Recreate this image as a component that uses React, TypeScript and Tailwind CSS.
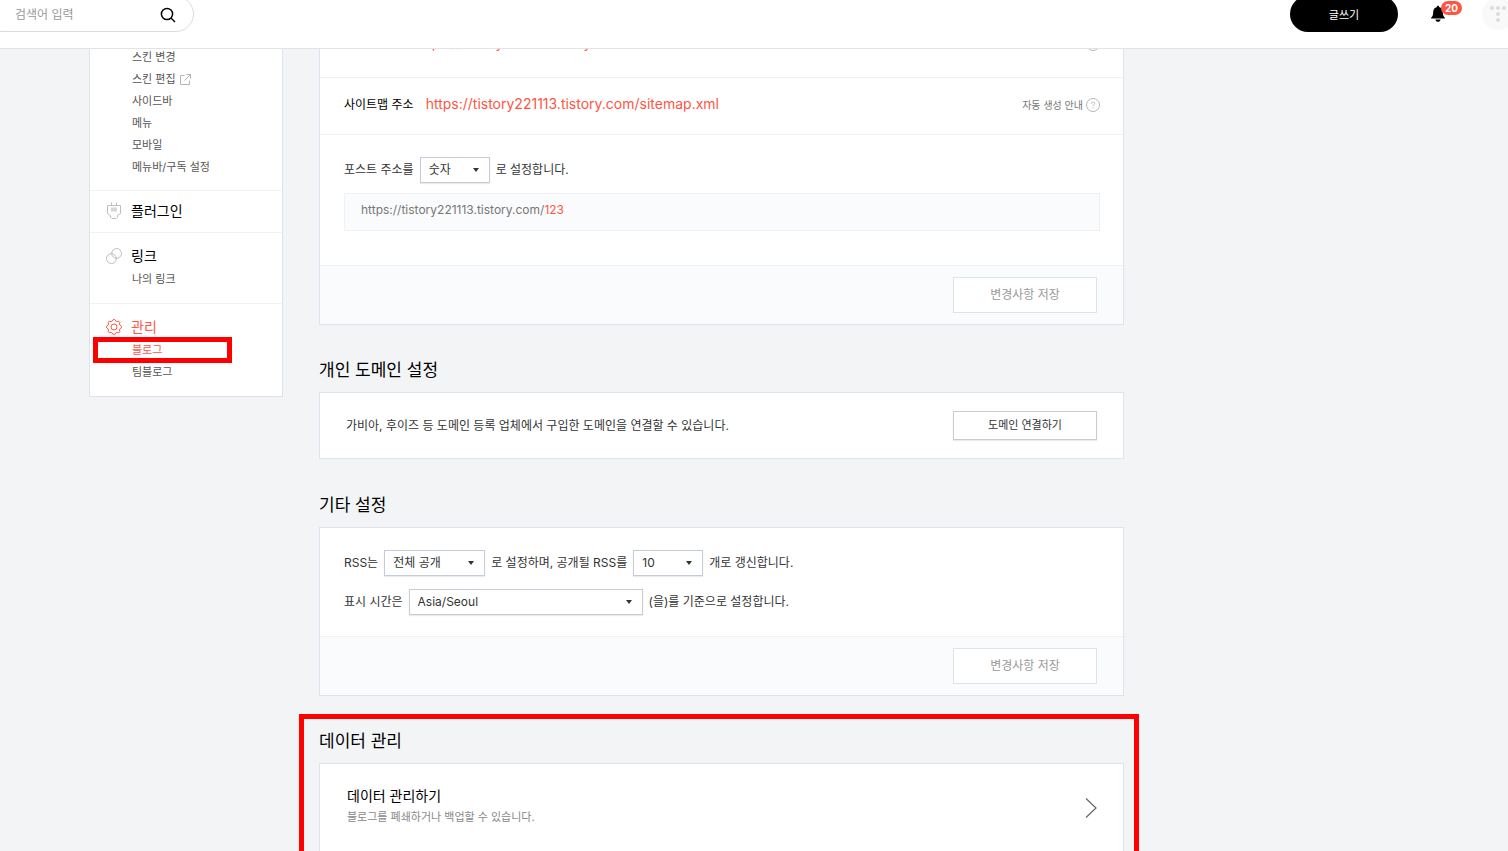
import { useState } from 'react';

const MAIN_FONT = "font-['Inter','Noto_Sans_CJK_KR',sans-serif]";

const SKIN_MENU = [
  { label: '스킨 변경' },
  { label: '스킨 편집', external: true },
  { label: '사이드바' },
  { label: '메뉴' },
  { label: '모바일' },
  { label: '메뉴바/구독 설정' }
];

const BLOG_URL = 'https://tistory221113.tistory.com';

// 8 teeth, four points per tooth
const GEAR_POINTS = Array.from({ length: 32 }, (_, i) => {
  const radius = i % 4 < 2 ? 7.5 : 6.2;
  const angle = ((i - 0.5) * Math.PI) / 16;
  return `${(8 + radius * Math.cos(angle)).toFixed(2)},${(8 + radius * Math.sin(angle)).toFixed(2)}`;
}).join(' ');

function SearchIcon() {
  return (
    <svg width="16" height="16" viewBox="0 0 16 16" fill="none" stroke="#000" strokeWidth="1.5">
      <circle cx="7" cy="7" r="5.6" />
      <path d="M11 11l4 4" />
    </svg>
  );
}

function BellIcon() {
  return (
    <svg width="16" height="18" viewBox="0 0 16 18" fill="#000">
      <path d="M8 0.8c.7 0 1.1.5 1.1 1.1C11.5 2.5 12.8 4.5 12.8 7c0 3 .7 4.6 2 5.6v.9H1.2v-.9c1.3-1 2-2.6 2-5.600 0-2.500 1.300-4.500 3.700-5.100C6.900 1.300 7.300.8 8 .8z" />
      <path d="M5.400 14.500h5.200c-.3 1.500-1.300 2.300-2.600 2.300s-2.300-.8-2.600-2.300z" />
    </svg>
  );
}

function ExternalIcon() {
  return (
    <svg width="11" height="11" viewBox="0 0 11 11" fill="none" stroke="#b5b5b5">
      <path d="M4.500 1.500h-4v9h9v-4" />
      <path d="M6.500.5h4v4M10.500.5l-6 6" />
    </svg>
  );
}

function PlugIcon() {
  return (
    <svg width="16" height="18" viewBox="0 0 16 18" fill="none" stroke="#bdbdbd">
      <path d="M1.500 3.500h13v8l-3 2v1.500l-1.500 1.500h-4L4.500 15v-1.500l-3-2z" />
      <path d="M5.500 0.500v3M10.500 0.500v3" />
      <path d="M5 6.500h6M5 8.500h6" stroke="#d6d6d6" strokeWidth="2" />
    </svg>
  );
}

function LinkIcon() {
  return (
    <svg width="16" height="16" viewBox="0 0 16 16" fill="none" stroke="#bdbdbd">
      <circle cx="10.600" cy="5.400" r="4.900" />
      <circle cx="5.400" cy="10.600" r="4.900" />
    </svg>
  );
}

function GearIcon() {
  return (
    <svg width="16" height="16" viewBox="0 0 16 16" fill="none" stroke="#ff5544">
      <circle cx="8" cy="8" r="3" />
      <polygon points={GEAR_POINTS} strokeLinejoin="round" />
    </svg>
  );
}

function HelpIcon() {
  return (
    <svg width="14" height="14" viewBox="0 0 14 14" fill="none" stroke="#b5b5b5">
      <circle cx="7" cy="7" r="6.500" />
      <path d="M5.300 5.700c0-1 .7-1.600 1.700-1.600s1.700.6 1.700 1.500c0 1.100-1.600 1.200-1.600 2.400M7.100 9v1.200" />
    </svg>
  );
}

interface SelectBoxProps {
  label: string;
  options: string[];
  className: string;
}

function SelectBox({ label, options, className }: SelectBoxProps) {
  const [value, setValue] = useState(options[0]);
  return (
    <span className={`relative mx-1.5 inline-block ${className}`}>
      <select
        aria-label={label}
        value={value}
        onChange={e => setValue(e.target.value)}
        className="block h-[26px] w-full appearance-none border border-[#c3ccd8] bg-white pl-2 pr-6 text-[12px] text-[#333] shadow-[0_1px_1px_rgba(0,0,0,0.08)] outline-none"
      >
        {options.map(o => <option key={o}>{o}</option>)}
      </select>
      <svg className="pointer-events-none absolute right-[11px] top-[11px]" width="6" height="4" viewBox="0 0 6 4" fill="#333">
        <path d="M0 0h6L3 4z" />
      </svg>
    </span>
  );
}

function SaveBar() {
  return (
    <div className="flex justify-end border-t border-[#eff1f5] bg-[#fafbfd] px-[26px] py-[11px]">
      <button type="button" className="h-9 w-36 border border-[#dfe3ee] bg-white text-[12px] text-[#999]">
        변경사항 저장
      </button>
    </div>
  );
}

function Header() {
  return (
    <header className="relative z-10 -mt-1 flex h-[53px] items-start justify-between border-b border-[#e1e3e6] bg-white">
      <form className="-ml-4 flex h-9 w-[210px] items-center justify-between rounded-full border border-[#dcdcdc] pl-[30px] pr-[17px] pt-0.5">
        <input
          type="text"
          aria-label="검색어 입력"
          placeholder="검색어 입력"
          className="w-28 text-[12px] outline-none placeholder:text-[#999]"
        />
        <button type="submit" aria-label="검색"><SearchIcon /></button>
      </form>
      <div className="-mr-[6px] flex h-9 items-center">
        <button type="button" className="h-9 w-[108px] rounded-full bg-black pt-0.5 text-[11px] text-white">글쓰기</button>
        <button type="button" aria-label="알림" className="relative ml-8 mr-9">
          <BellIcon />
          <span className="absolute -top-1 left-[11px] h-[14px] rounded-full bg-[#ff5544] px-1 text-[10px] font-bold leading-[14px] text-white">20</span>
        </button>
        <a href="#profile" aria-label="프로필" className="flex size-8 items-center justify-center rounded-full bg-[#f9f9f9]">
          <svg width="18" height="18" viewBox="0 0 18 18" fill="#dcdcdc">
            <circle cx="3" cy="3" r="2" />
            <circle cx="9" cy="3" r="2" />
            <circle cx="15" cy="3" r="2" />
            <circle cx="9" cy="9" r="2" />
            <circle cx="9" cy="15" r="2" />
          </svg>
        </a>
      </div>
    </header>
  );
}

function Sidebar() {
  return (
    <nav className="w-[194px] shrink-0 self-start border border-t-0 border-[#dfe3ee] bg-white text-[11px] leading-[22px] text-[#555]">
      <ul className="-mt-[3px] pb-3 pl-[42px]">
        {SKIN_MENU.map(item => (
          <li key={item.label}>
            <a href="#skin" className="inline-flex items-center gap-1">
              {item.label}
              {item.external && <ExternalIcon />}
            </a>
          </li>
        ))}
      </ul>
      <div className="border-t border-[#eff1f5] px-4 pb-[10px] pt-[9px]">
        <a href="#plugin" className="flex items-center gap-[9px] text-[14px] text-black">
          <PlugIcon /> 플러그인
        </a>
      </div>
      <div className="border-t border-[#eff1f5] px-4 pb-[13px] pt-3">
        <a href="#link" className="flex items-center gap-[9px] text-[14px] text-black">
          <LinkIcon /> 링크
        </a>
        <a href="#my-link" className="ml-[26px] mt-px block">나의 링크</a>
      </div>
      <div className="border-t border-[#eff1f5] px-4 pb-[13px] pt-3">
        <a href="#manage" className="flex items-center gap-[9px] text-[14px] text-[#ff5544]">
          <GearIcon /> 관리
        </a>
        <div className="relative mt-px">
          <a href="#blog" className="ml-[26px] block text-[#ff5544]">블로그</a>
          <div className="pointer-events-none absolute -left-[13px] -top-0.5 h-[26px] w-[139px] border-5 border-[#ff0000]" />
        </div>
        <a href="#team" className="ml-[26px] block">팀블로그</a>
      </div>
    </nav>
  );
}

interface AddressRowProps {
  label: string;
  url: string;
  guide: string;
  className: string;
}

function AddressRow({ label, url, guide, className }: AddressRowProps) {
  return (
    <div className={`flex items-baseline border-b border-[#eff1f5] pl-6 pr-[23px] leading-5 ${className}`}>
      <span className="text-[12px] text-black">{label}</span>
      <a href={url} className="ml-3 text-[14px] text-[#ff5544]">{url}</a>
      <a href="#guide" className="ml-auto flex items-center gap-[3px] text-[10px] text-[#777]">
        {guide} <HelpIcon />
      </a>
    </div>
  );
}

export default function App() {
  return (
    <div className={`h-screen overflow-hidden bg-[#f3f4f6] ${MAIN_FONT}`}>
      <Header />
      <div className="flex gap-9 pl-[89px] pr-6">
        <Sidebar />
        <main className="min-w-0 max-w-[805px] flex-1 text-[12px] text-[#333]">
          <section className="-mt-[33px] border border-[#dfe3ee] bg-white">
            <AddressRow label="블로그 주소" url={BLOG_URL} guide="주소 안내" className="h-[61px] pt-4" />
            <AddressRow label="사이트맵 주소" url={`${BLOG_URL}/sitemap.xml`} guide="자동 생성 안내" className="h-[57px] pt-4" />
            <div className="pb-[34px] pl-6 pr-[23px] pt-[22px]">
              <div className="flex items-center">
                포스트 주소를
                <SelectBox label="포스트 주소" options={['숫자', '문자']} className="w-[70px]" />
                로 설정합니다.
              </div>
              <p className="mt-[10px] border border-[#eff1f5] bg-[#fafbfd] px-4 pb-[10px] pt-1.5 leading-5 text-[#777]">
                {BLOG_URL}/<span className="text-[#ff5544]">123</span>
              </p>
            </div>
            <SaveBar />
          </section>

          <section className="mt-[33px]">
            <h2 className="text-[17px] leading-6 text-black">개인 도메인 설정</h2>
            <div className="mt-[10px] flex items-center justify-between border border-[#dfe3ee] bg-white px-[26px] py-[18px]">
              <p>가비아, 후이즈 등 도메인 등록 업체에서 구입한 도메인을 연결할 수 있습니다.</p>
              <button type="button" className="h-[29px] w-36 border border-[#c3ccd8] bg-white text-[11px] text-[#333] shadow-[0_1px_1px_rgba(0,0,0,0.08)]">
                도메인 연결하기
              </button>
            </div>
          </section>

          <section className="mt-[34px]">
            <h2 className="text-[17px] leading-6 text-black">기타 설정</h2>
            <div className="mt-[10px] border border-[#dfe3ee] bg-white">
              <div className="px-6 pb-[21px] pt-[22px]">
                <div className="flex items-center">
                  RSS는
                  <SelectBox label="RSS 공개" options={['전체 공개', '부분 공개', '비공개']} className="w-[101px]" />
                  로 설정하며, 공개될 RSS를
                  <SelectBox label="RSS 개수" options={['10', '20', '30']} className="w-[70px]" />
                  개로 갱신합니다.
                </div>
                <div className="mt-[13px] flex items-center">
                  표시 시간은
                  <SelectBox label="표시 시간" options={['Asia/Seoul', 'Asia/Tokyo', 'UTC']} className="w-[234px]" />
                  (을)를 기준으로 설정합니다.
                </div>
              </div>
              <SaveBar />
            </div>
          </section>

          <section className="relative mt-[33px]">
            <h2 className="text-[17px] leading-6 text-black">데이터 관리</h2>
            <a href="#data" className="mt-[10px] flex h-[90px] items-center justify-between border border-[#dfe3ee] bg-white pl-[27px] pr-[26px]">
              <span className="pb-1">
                <strong className="block text-[14px] font-normal leading-[22px] text-black">데이터 관리하기</strong>
                <span className="block text-[11px] leading-5 text-[#888]">블로그를 폐쇄하거나 백업할 수 있습니다.</span>
              </span>
              <svg width="12" height="20" viewBox="0 0 12 20" fill="none" stroke="#666" strokeWidth="1.2">
                <path d="M1 0.500l10 9.500-10 9.500" />
              </svg>
            </a>
            <div className="pointer-events-none absolute -bottom-5 -left-5 -right-[15px] -top-[15px] border-5 border-[#ff0000]" />
          </section>
        </main>
      </div>
    </div>
  );
}
